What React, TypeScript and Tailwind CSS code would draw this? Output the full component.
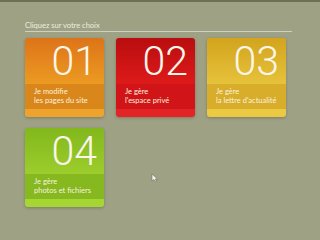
const cards = [
  { n: '01', l1: 'Je modifie', l2: 'les pages du site', top: 'bg-gradient-to-b from-[#dd7418] to-[#ec9a22]', band: 'bg-[#d9861a]', foot: 'bg-[#eea42c]' },
  { n: '02', l1: 'Je gère', l2: "l'espace privé", top: 'bg-gradient-to-b from-[#b90d0f] to-[#de1a1a]', band: 'bg-[#d01417]', foot: 'bg-[#e22426]' },
  { n: '03', l1: 'Je gère', l2: "la lettre d'actualité", top: 'bg-gradient-to-b from-[#d3a41c] to-[#e6c23a]', band: 'bg-[#d8ad2a]', foot: 'bg-[#ebc942]' },
  { n: '04', l1: 'Je gère', l2: 'photos et fichiers', top: 'bg-gradient-to-b from-[#82b81c] to-[#9ccd2c]', band: 'bg-[#86b820]', foot: 'bg-[#a6d634]' },
];

export default function App() {
  return (
    <div className="w-[320px] h-[240px] overflow-hidden bg-[#9ea184] border-t-2 border-[#6c7055] relative" style={{ fontFamily: 'Lato, "Liberation Sans", sans-serif' }}>
      <div className="pl-[25px] pr-[28px] pt-[19px]">
        <div className="text-[7.5px] leading-[9px] text-[#eceedf] border-b border-[#cfd1c0] pb-[1px]">Cliquez sur votre choix</div>
        <div className="grid grid-cols-[79px_79px_79px] gap-x-[12px] gap-y-[11px] mt-[6px]">
          {cards.map((c) => (
            <div key={c.n} className="w-[79px] h-[79px] rounded-[3px] overflow-hidden shadow-[0_1px_3px_rgba(60,60,40,0.35)] flex flex-col">
              <div className={'h-[46px] pt-[3px] pr-[7px] text-right ' + c.top}>
                <span className="text-[41px] leading-none font-light text-[#fbf6ea]" style={{ fontFamily: 'Roboto, sans-serif' }}>{c.n}</span>
              </div>
              <div className={'h-[25px] pl-[9px] pt-[4px] text-[7.5px] leading-[8.5px] text-[#fbf1df] ' + c.band}>
                <div>{c.l1}</div>
                <div>{c.l2}</div>
              </div>
              <div className={'flex-1 ' + c.foot}></div>
            </div>
          ))}
        </div>
      </div>
      <svg className="absolute left-[151px] top-[171px]" width="7" height="10" viewBox="0 0 7 10">
        <path d="M1 1 L1 8 L3 6.5 L4.5 9 L5.5 8.5 L4.2 6 L6.5 6 Z" fill="#f4f4ec" stroke="#6e7060" strokeWidth="0.6" />
      </svg>
    </div>
  );
}
